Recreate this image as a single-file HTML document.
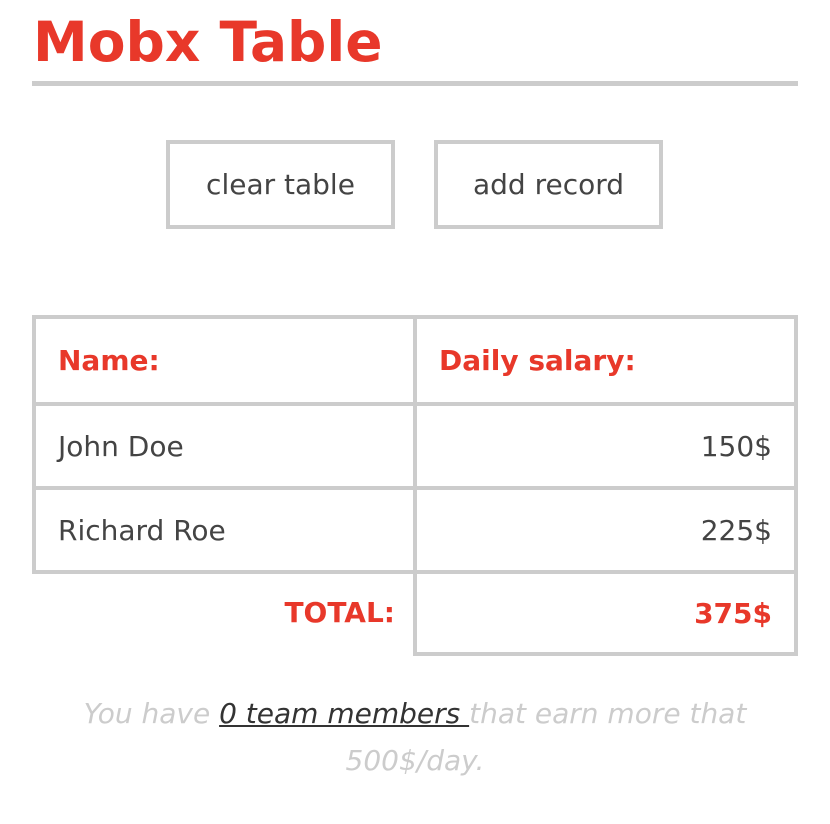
<!DOCTYPE html>
<html><head><style>
body{margin:0;background:#fff;font-family:"Comic Sans MS","DejaVu Sans",sans-serif;width:830px;height:824px;overflow:hidden;position:relative}
.t{position:absolute;left:33px;top:2px;font-size:55px;font-weight:bold;color:#e8382a;margin:0;line-height:80px;letter-spacing:0px}
.hr{position:absolute;left:32px;top:81px;width:766px;height:5px;background:#ccc}
.b{position:absolute;top:140px;height:81px;border:4px solid #ccc;box-sizing:content-box;font-size:28px;color:#444;display:flex;align-items:center;justify-content:center}
.c{position:absolute;box-sizing:border-box;font-size:28px;color:#444;display:flex;align-items:center;padding:0 22px}
.bd{border:4px solid #ccc}
.r{color:#e8382a;font-weight:bold}
.f{position:absolute;left:40px;width:750px;top:690px;text-align:center;font-style:italic;color:#ccc;font-size:28px;line-height:47px}
.f u{color:#333}
</style></head><body>
<div class="t">Mobx Table</div>
<div class="hr"></div>
<div class="b" style="left:166px;width:221px">clear table</div>
<div class="b" style="left:434px;width:221px">add record</div>
<div class="c bd r" style="left:32px;top:315px;width:385px;height:91px">Name:</div>
<div class="c bd r" style="left:413px;top:315px;width:385px;height:91px">Daily salary:</div>
<div class="c bd" style="left:32px;top:402px;width:385px;height:88px">John Doe</div>
<div class="c bd" style="left:413px;top:402px;width:385px;height:88px;justify-content:flex-end">150$</div>
<div class="c bd" style="left:32px;top:486px;width:385px;height:88px">Richard Roe</div>
<div class="c bd" style="left:413px;top:486px;width:385px;height:88px;justify-content:flex-end">225$</div>
<div class="c r" style="left:32px;top:570px;width:385px;height:85px;justify-content:flex-end">TOTAL:</div>
<div class="c bd r" style="left:413px;top:570px;width:385px;height:86px;justify-content:flex-end">375$</div>
<div class="f">You have <u>0 team members </u> that earn more that 500$/day.</div>
</body></html>
